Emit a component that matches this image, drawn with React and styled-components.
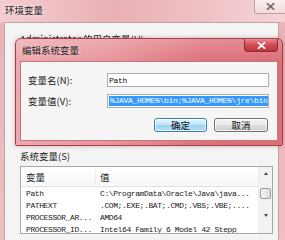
import React from "react"
import styled, { createGlobalStyle } from "styled-components"

const GlobalStyle = createGlobalStyle`
  html, body {
    margin: 0;
    padding: 0;
    width: 285px;
    height: 240px;
    overflow: hidden;
    background: #eec3c7;
  }
`

const cjk = `"Noto Sans CJK SC", "Liberation Sans", sans-serif`
const mono = `"Liberation Mono", "Noto Sans CJK SC", monospace`

//outer window
const Window = styled.div`
  position: relative;
  width: 285px;
  height: 240px;
  overflow: hidden;
  display: flex;
  flex-direction: column;
  background: linear-gradient(180deg, #efbcc1 0%, #ebb3b8 12%, #eebfc3 100%);
`

const TitleBar = styled.div`
  height: 22px;
  flex: none;
  display: flex;
  justify-content: space-between;
  align-items: flex-start;
  background: linear-gradient(90deg, #f3cdd0 0%, #eab0b5 40%, #efc0c4 70%, #f4d4d7 100%);
`

const Title = styled.div`
  font-family: ${cjk};
  font-size: 9.5px;
  line-height: 10px;
  color: #1a1a1a;
  padding: 5px 0 0 5px;
  text-shadow: 0 0 4px rgba(255, 255, 255, 0.9);
`

const OuterClose = styled.div`
  width: 31px;
  height: 13px;
  margin-right: -2px;
  border: 1px solid #c59a9e;
  border-top: none;
  border-radius: 0 0 0 3px;
  background: linear-gradient(180deg, #fbeeee, #f1dcdd);
  display: flex;
  align-items: center;
  justify-content: center;
`

const Client = styled.div`
  flex: 1;
  margin: 0 6px 0 4px;
  border: 1px solid #b7a4a6;
  border-bottom: none;
  background: #f4f4f4;
  display: flex;
  flex-direction: column;
  padding: 10px 5px 0 15px;
`

const GroupLabel = styled.div`
  font-family: ${cjk};
  font-size: 9.5px;
  line-height: 12px;
  color: #1a1a1a;
  white-space: nowrap;
  filter: ${props => (props.blur ? "blur(0.6px)" : "none")};
`

const UserArea = styled.div`
  height: 105px;
  flex: none;
`

const ListBox = styled.div`
  margin-top: 4px;
  width: 251px;
  height: 66px;
  border: 1px solid #a8a8a8;
  background: #fff;
  display: flex;
`

const ListMain = styled.div`
  flex: 1;
  display: flex;
  flex-direction: column;
  overflow: hidden;
`

const HeaderRow = styled.div`
  height: 19px;
  flex: none;
  display: grid;
  grid-template-columns: 74px 1fr;
  align-items: center;
  border-bottom: 1px solid #e2e2e2;
  background: linear-gradient(180deg, #ffffff, #f7f8fa);
  font-family: ${cjk};
  font-size: 9.5px;
  color: #1a1a1a;
  span {
    padding-left: 5px;
  }
  span + span {
    border-left: 1px solid #ececec;
    padding-left: 4px;
  }
`

const Row = styled.div`
  height: 12px;
  flex: none;
  display: grid;
  grid-template-columns: 74px 1fr;
  align-items: center;
  font-family: ${mono};
  font-size: 8px;
  letter-spacing: -0.4px;
  color: #222;
  white-space: nowrap;
  span {
    padding-left: 5px;
    overflow: hidden;
  }
`

const ScrollBar = styled.div`
  width: 13px;
  flex: none;
  border-left: 1px solid #ececec;
  background: #f2f2f2;
  display: flex;
  flex-direction: column;
  align-items: center;
  padding-top: 5px;
`

const Arrow = styled.div`
  width: 0;
  height: 0;
  border-left: 2.5px solid transparent;
  border-right: 2.5px solid transparent;
  ${props =>
    props.down
      ? "border-top: 3px solid #4a4a4a;"
      : "border-bottom: 3px solid #4a4a4a;"}
`

const Thumb = styled.div`
  width: 11px;
  height: 11px;
  margin: 13px 0 15px;
  border: 1px solid #9a9a9a;
  border-radius: 2px;
  box-sizing: border-box;
  background: linear-gradient(90deg, #f4f4f4, #dcdcdc);
`

//edit dialog (over the outer window)
const Dialog = styled.div`
  position: absolute;
  left: 15px;
  top: 38px;
  width: 268px;
  height: 108px;
  box-sizing: border-box;
  border: 1px solid #a8404b;
  border-radius: 6px 6px 2px 2px;
  background: linear-gradient(
    90deg,
    #eda9ae 0%,
    #e8959c 35%,
    #df727b 70%,
    #dc6f78 100%
  );
  box-shadow: 0 0 4px rgba(120, 40, 50, 0.35);
  display: flex;
  flex-direction: column;
`

const DialogTitleBar = styled.div`
  height: 22px;
  flex: none;
  display: flex;
  justify-content: space-between;
  align-items: flex-start;
  background: linear-gradient(180deg, rgba(255, 255, 255, 0.2), rgba(255, 255, 255, 0));
  border-radius: 5px 5px 0 0;
`

const DialogTitle = styled.div`
  font-family: ${cjk};
  font-size: 9.5px;
  line-height: 10px;
  color: #1a1a1a;
  padding: 6px 0 0 6px;
  text-shadow: 0 0 4px rgba(255, 225, 225, 0.9);
`

const CloseButton = styled.div`
  width: 34px;
  height: 13px;
  margin-right: 4px;
  box-sizing: border-box;
  border: 1px solid #8a2d35;
  border-top: none;
  border-radius: 0 0 4px 4px;
  background: linear-gradient(180deg, #e88a90 0%, #d24a53 50%, #c0323b 100%);
  display: flex;
  align-items: center;
  justify-content: center;
`

const DialogBody = styled.div`
  flex: 1;
  margin: 0 4px 4px 4px;
  border: 1px solid #c07880;
  background: #f5f5f5;
  display: flex;
  flex-direction: column;
  padding: 11px 8px 0 7px;
`

const FieldRow = styled.div`
  display: grid;
  grid-template-columns: 79px 1fr;
  align-items: center;
  height: 14px;
  margin-bottom: 7px;
`

const Label = styled.div`
  font-family: ${cjk};
  font-size: 9.5px;
  color: #1a1a1a;
  white-space: nowrap;
`

const Input = styled.div`
  height: 14px;
  box-sizing: border-box;
  border: 1px solid #abadb3;
  background: #fff;
  padding: 1px;
  display: flex;
  align-items: center;
  font-family: ${mono};
  font-size: 8px;
  letter-spacing: -0.3px;
  color: #111;
  white-space: nowrap;
  overflow: hidden;
`

const Selected = styled.span`
  background: #3399ff;
  color: #fff;
  line-height: 10px;
  padding: 0 1px;
`

const ButtonRow = styled.div`
  display: flex;
  justify-content: flex-end;
  gap: 7px;
  padding-right: 1px;
  margin-top: 3px;
`

const Button = styled.div`
  width: ${props => props.width}px;
  height: 14px;
  box-sizing: border-box;
  border: 1px solid ${props => (props.primary ? "#3c7fb1" : "#707070")};
  border-radius: 3px;
  background: ${props =>
    props.primary
      ? "linear-gradient(180deg, #e5f4fc 0%, #c4e5f6 50%, #98d1ef 51%, #b6e1f5 100%)"
      : "linear-gradient(180deg, #f2f2f2 0%, #ebebeb 50%, #dddddd 51%, #cfcfcf 100%)"};
  box-shadow: inset 0 0 0 1px rgba(255, 255, 255, 0.7);
  display: flex;
  align-items: center;
  justify-content: center;
  font-family: ${cjk};
  font-size: 9.5px;
  color: #111;
`

const CloseX = ({ color }) => (
  <svg width="9" height="7" viewBox="0 0 9 7">
    <path
      d="M1.5 0.8 L7.5 6.2 M7.5 0.8 L1.5 6.2"
      stroke={color}
      strokeWidth="1.8"
      strokeLinecap="square"
      fill="none"
    />
  </svg>
)

const rows = [
  ["Path", "C:\\ProgramData\\Oracle\\Java\\java..."],
  ["PATHEXT", ".COM;.EXE;.BAT;.CMD;.VBS;.VBE;...."],
  ["PROCESSOR_AR...", "AMD64"],
  ["PROCESSOR_ID...", "Intel64 Family 6 Model 42 Stepp"]
]

const App = () => {
  return (
    <>
      <GlobalStyle />
      <Window>
        <TitleBar>
          <Title>环境变量</Title>
          <OuterClose>
            <CloseX color="#7a6a6c" />
          </OuterClose>
        </TitleBar>
        <Client>
          <GroupLabel blur>Administrator 的用户变量(U)</GroupLabel>
          <UserArea />
          <GroupLabel>系统变量(S)</GroupLabel>
          <ListBox>
            <ListMain>
              <HeaderRow>
                <span>变量</span>
                <span>值</span>
              </HeaderRow>
              {rows.map((r, i) => (
                <Row key={i}>
                  <span>{r[0]}</span>
                  <span>{r[1]}</span>
                </Row>
              ))}
            </ListMain>
            <ScrollBar>
              <Arrow />
              <Thumb />
              <Arrow down />
            </ScrollBar>
          </ListBox>
        </Client>

        <Dialog>
          <DialogTitleBar>
            <DialogTitle>编辑系统变量</DialogTitle>
            <CloseButton>
              <CloseX color="#ffffff" />
            </CloseButton>
          </DialogTitleBar>
          <DialogBody>
            <FieldRow>
              <Label>变量名(N):</Label>
              <Input>Path</Input>
            </FieldRow>
            <FieldRow>
              <Label>变量值(V):</Label>
              <Input>
                <Selected>%JAVA_HOME%\bin;%JAVA_HOME%\jre\bin</Selected>
              </Input>
            </FieldRow>
            <ButtonRow>
              <Button primary width={53}>
                确定
              </Button>
              <Button width={54}>取消</Button>
            </ButtonRow>
          </DialogBody>
        </Dialog>
      </Window>
    </>
  )
}

export default App
